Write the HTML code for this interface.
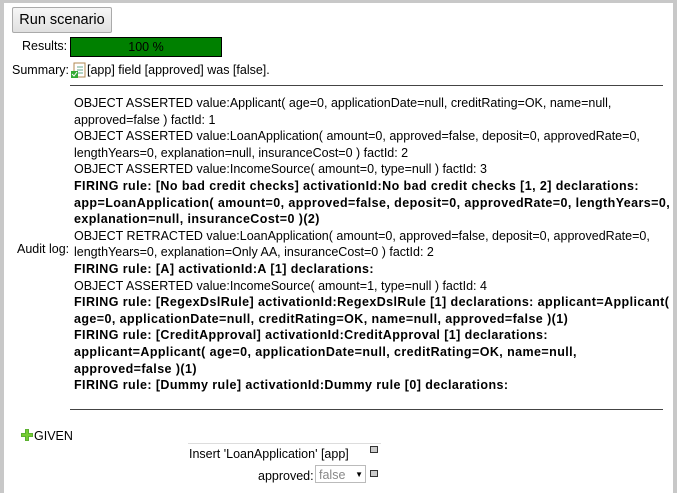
<!DOCTYPE html>
<html><head><meta charset="utf-8"><style>
body{margin:0;width:677px;height:482px;overflow:hidden;background:#fff;font-family:"Liberation Sans",sans-serif;font-size:12.5px;color:#000;}
.frame{position:absolute;left:0;top:0;width:669px;height:490px;border-left:4px solid #c8c8c8;border-top:3px solid #c8c8c8;border-right:4px solid #c8c8c8;}
.abs{position:absolute;white-space:nowrap;}
.btn{left:12px;top:7px;width:98px;height:24px;border:1px solid #aaa;background:linear-gradient(#f6f6f6,#e0e0e0);font-size:14.5px;line-height:24px;text-align:center;border-radius:2px;}
.bar{left:70px;top:37px;width:150px;height:18px;background:#008000;border:1px solid #000;text-align:center;line-height:18px;}
.rule{position:absolute;left:70px;width:593px;height:1px;background:#444;}
.log{left:74px;top:95px;line-height:16.6px;}
.log b{font-weight:bold;letter-spacing:0.42px;}
</style></head><body>
<div class="frame"></div>
<div class="abs btn">Run scenario</div>
<div class="abs" style="left:22px;top:39px;">Results:</div>
<div class="abs bar">100 %</div>
<div class="abs" style="left:12px;top:63px;">Summary:</div>
<svg class="abs" style="left:70px;top:62px" width="16" height="17" viewBox="0 0 16 17">
<rect x="4" y="1" width="11" height="14" fill="#fff" stroke="#b08850"/>
<line x1="7" y1="5" x2="13" y2="5" stroke="#6a8"/><line x1="7" y1="8" x2="13" y2="8" stroke="#6a8"/><line x1="7" y1="11" x2="13" y2="11" stroke="#6a8"/>
<rect x="1" y="9" width="7" height="7" fill="#3a3"/><path d="M2 12l2 2 3-4" stroke="#fff" fill="none"/>
</svg>
<div class="abs" style="left:87px;top:63px;">[app] field [approved] was [false].</div>
<div class="rule" style="top:85px"></div>
<div class="abs" style="left:17px;top:242px;">Audit log:</div>
<div class="abs log">OBJECT ASSERTED value:Applicant( age=0, applicationDate=null, creditRating=OK, name=null,<br>approved=false ) factId: 1<br>OBJECT ASSERTED value:LoanApplication( amount=0, approved=false, deposit=0, approvedRate=0,<br>lengthYears=0, explanation=null, insuranceCost=0 ) factId: 2<br>OBJECT ASSERTED value:IncomeSource( amount=0, type=null ) factId: 3<br><b>FIRING rule: [No bad credit checks] activationId:No bad credit checks [1, 2] declarations:<br>app=LoanApplication( amount=0, approved=false, deposit=0, approvedRate=0, lengthYears=0,<br>explanation=null, insuranceCost=0 )(2)</b><br>OBJECT RETRACTED value:LoanApplication( amount=0, approved=false, deposit=0, approvedRate=0,<br>lengthYears=0, explanation=Only AA, insuranceCost=0 ) factId: 2<br><b>FIRING rule: [A] activationId:A [1] declarations:</b><br>OBJECT ASSERTED value:IncomeSource( amount=1, type=null ) factId: 4<br><b>FIRING rule: [RegexDslRule] activationId:RegexDslRule [1] declarations: applicant=Applicant(<br>age=0, applicationDate=null, creditRating=OK, name=null, approved=false )(1)<br>FIRING rule: [CreditApproval] activationId:CreditApproval [1] declarations:<br>applicant=Applicant( age=0, applicationDate=null, creditRating=OK, name=null,<br>approved=false )(1)<br>FIRING rule: [Dummy rule] activationId:Dummy rule [0] declarations:</b></div>
<div class="rule" style="top:409px"></div>
<svg class="abs" style="left:21px;top:429px" width="12" height="12" viewBox="0 0 12 12"><path d="M4 0h4v4h4v4h-4v4h-4v-4h-4v-4h4z" fill="#7c3"/><path d="M4.5 .5h3v4h4v3h-4v4h-3v-4h-4v-3h4z" fill="none" stroke="#493" stroke-width=".6"/></svg>
<div class="abs" style="left:34px;top:429px;">GIVEN</div>
<div class="abs" style="left:188px;top:443px;width:193px;height:1px;background:#ddd;"></div>
<div class="abs" style="left:370px;top:446px;width:6px;height:5px;border:1px solid #333;background:#ccc;"></div>
<div class="abs" style="left:189px;top:447px;">Insert 'LoanApplication' [app]</div>
<div class="abs" style="left:258px;top:469px;">approved:</div>
<div class="abs" style="left:315px;top:465px;height:18px;border:1px solid #bbb;color:#888;line-height:18px;padding-left:3px;box-sizing:border-box;width:51px;">false<span style="position:absolute;right:2px;top:0;color:#000;font-size:8px;">▼</span></div>
<div class="abs" style="left:370px;top:470px;width:6px;height:5px;border:1px solid #333;background:#ccc;"></div>
</body></html>
